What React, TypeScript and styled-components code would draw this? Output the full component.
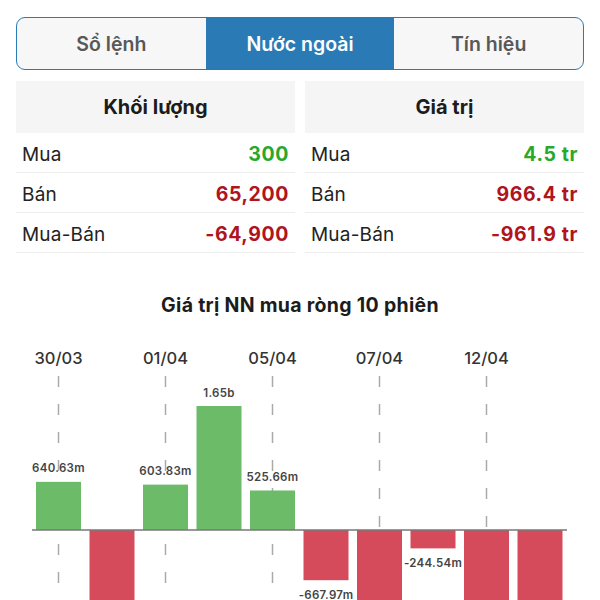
import React from "react";
import styled, { createGlobalStyle } from "styled-components";

const Global = createGlobalStyle`
  html, body { margin: 0; padding: 0; background: #fff; }
  body { font-family: "Inter", "Noto Sans", sans-serif; color: #222; }
  * { box-sizing: border-box; }
`;

const Page = styled.div`
  width: 600px;
  display: flex;
  flex-direction: column;
`;

const Top = styled.div`
  padding: 17px 16px 0;
  display: flex;
  flex-direction: column;
  gap: 11px;
`;

const Segmented = styled.div`
  display: flex;
  height: 53px;
  border: 1.5px solid #2a7bb5;
  border-radius: 9px;
  overflow: hidden;
  background: #f7f7f7;
`;

const Segment = styled.div<{ $active?: boolean }>`
  flex: 1;
  display: flex;
  align-items: center;
  justify-content: center;
  font-size: 19.5px;
  font-weight: 600;
  color: ${(p) => (p.$active ? "#fff" : "#585858")};
  background: ${(p) => (p.$active ? "#2a7bb5" : "transparent")};
`;

const Tables = styled.div`
  display: grid;
  grid-template-columns: 1fr 1fr;
  gap: 10px;
`;

const Table = styled.div`
  display: flex;
  flex-direction: column;
`;

const Header = styled.div`
  height: 52px;
  background: #f5f5f5;
  display: flex;
  align-items: center;
  justify-content: center;
  font-size: 20px;
  font-weight: 700;
  color: #1c1c1c;
`;

const Row = styled.div`
  height: 40px;
  display: flex;
  align-items: center;
  justify-content: space-between;
  padding: 3px 6px 0;
  border-bottom: 1px solid #eeeeee;
  font-size: 19px;
`;

const Label = styled.span`
  color: #222;
  letter-spacing: 0.2px;
`;

const Value = styled.span<{ $tone: "up" | "down" }>`
  font-weight: 700;
  font-size: 19.5px;
  letter-spacing: 0.6px;
  color: ${(p) => (p.$tone === "up" ? "#2aa82a" : "#b0141c")};
`;

const ChartSection = styled.div`
  display: flex;
  flex-direction: column;
  align-items: center;
  padding-top: 40px;
`;

const ChartTitle = styled.div`
  font-size: 19.5px;
  font-weight: 700;
  letter-spacing: 0.3px;
  color: #1c1c1c;
  height: 24px;
  line-height: 24px;
`;

const ChartSvg = styled.svg`
  display: block;
  width: 600px;
  overflow: hidden;
`;

type Item = { label: string; value: string; tone: "up" | "down" };

const volume: Item[] = [
  { label: "Mua", value: "300", tone: "up" },
  { label: "Bán", value: "65,200", tone: "down" },
  { label: "Mua-Bán", value: "-64,900", tone: "down" },
];
const worth: Item[] = [
  { label: "Mua", value: "4.5 tr", tone: "up" },
  { label: "Bán", value: "966.4 tr", tone: "down" },
  { label: "Mua-Bán", value: "-961.9 tr", tone: "down" },
];

const bars = [
  { v: 640.63, t: "640.63m" },
  { v: -1420, t: "-1.42b" },
  { v: 603.83, t: "603.83m" },
  { v: 1650, t: "1.65b" },
  { v: 525.66, t: "525.66m" },
  { v: -667.97, t: "-667.97m" },
  { v: -1510, t: "-1.51b" },
  { v: -244.54, t: "-244.54m" },
  { v: -1380, t: "-1.38b" },
  { v: -1450, t: "-1.45b" },
];
const dates = ["30/03", "01/04", "05/04", "07/04", "12/04"];

const OFF = 317; // svg top in page coords
const H = 600 - OFF;
const BASE = 530 - OFF;
const SCALE = 124 / 1650;
const BW = 45;
const left = (i: number) => 36 + i * 53.5;

function Chart() {
  return (
    <ChartSvg height={H} viewBox={`0 0 600 ${H}`}>
      {dates.map((d, k) => {
        const cx = left(k * 2) + BW / 2;
        return (
          <g key={d}>
            <text x={cx} y={358 - OFF + 6} textAnchor="middle" fontSize={16.5} fontWeight={500} fill="#333">
              {d}
            </text>
            <line x1={cx} x2={cx} y1={376 - OFF} y2={H} stroke="#aaa" strokeWidth={1.5} strokeDasharray="11 17" />
          </g>
        );
      })}
      {bars.map((b, i) => {
        const h = Math.abs(b.v) * SCALE;
        const x = left(i);
        const up = b.v > 0;
        const y = up ? BASE - h : BASE;
        const ly = up ? BASE - h - 9.5 : BASE + h + 19;
        return (
          <g key={i}>
            <rect x={x} y={y} width={BW} height={Math.min(h, H - y)} fill={up ? "#6cbb69" : "#d54b5b"} />
            {ly < H + 4 && (
              <text
                x={x + BW / 2}
                y={ly}
                textAnchor="middle"
                fontSize={11.5}
                fontWeight={600}
                fill="#444"
                letterSpacing={0.3}
              >
                {b.t}
              </text>
            )}
          </g>
        );
      })}
      <line x1={32} x2={567} y1={BASE} y2={BASE} stroke="#777" strokeWidth={1.5} />
    </ChartSvg>
  );
}

export default function App() {
  return (
    <Page>
      <Global />
      <Top>
        <Segmented>
          <Segment>Sổ lệnh</Segment>
          <Segment $active>Nước ngoài</Segment>
          <Segment>Tín hiệu</Segment>
        </Segmented>
        <Tables>
          {[
            { title: "Khối lượng", rows: volume },
            { title: "Giá trị", rows: worth },
          ].map((t) => (
            <Table key={t.title}>
              <Header>{t.title}</Header>
              {t.rows.map((r) => (
                <Row key={r.label}>
                  <Label>{r.label}</Label>
                  <Value $tone={r.tone}>{r.value}</Value>
                </Row>
              ))}
            </Table>
          ))}
        </Tables>
      </Top>
      <ChartSection>
        <ChartTitle>Giá trị NN mua ròng 10 phiên</ChartTitle>
        <Chart />
      </ChartSection>
    </Page>
  );
}
